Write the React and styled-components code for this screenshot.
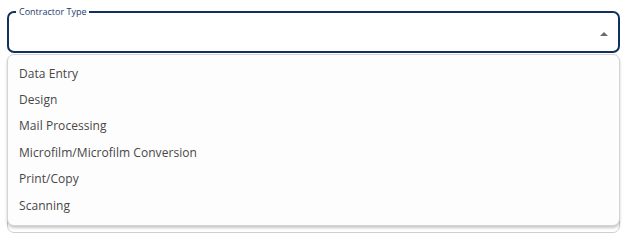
import React from "react";
import styled, { createGlobalStyle } from "styled-components";

const Global = createGlobalStyle`
  html, body { margin: 0; padding: 0; background: #ffffff; }
  body { font-family: "Open Sans", "Liberation Sans", sans-serif; }
`;

const Page = styled.div`
  position: relative;
  box-sizing: border-box;
  height: 233px;
  overflow: hidden;
  padding: 6px 4px 0 7px;
  display: flex;
  flex-direction: column;
  gap: 10px;
`;

const Field = styled.fieldset`
  margin: 0;
  padding: 0 10px 0 7px;
  min-width: 0;
  height: ${(p) => (p.$grow ? "auto" : "47px")};
  flex: ${(p) => (p.$grow ? "1 0 auto" : "0 0 auto")};
  box-sizing: border-box;
  border: ${(p) => (p.$active ? "2px solid #10305f" : "1px solid #cfcfcf")};
  border-radius: 7px;
`;

const Legend = styled.legend`
  font-size: 9px;
  line-height: 12px;
  color: #1d3b6c;
  padding: 0 3px;
`;

const Control = styled.div`
  height: 31px;
  display: flex;
  align-items: center;
  justify-content: flex-end;
`;

const Caret = styled.span`
  width: 0;
  height: 0;
  border-left: 4px solid transparent;
  border-right: 4px solid transparent;
  border-bottom: 4px solid #6a6a6a;
`;

const Menu = styled.ul`
  position: absolute;
  top: 54px;
  left: 7px;
  right: 4px;
  margin: 0;
  padding: 5px 0 7px;
  list-style: none;
  background: #fdfdfd;
  border: 1px solid #d4d4d4;
  border-radius: 7px;
  box-shadow: 0 2px 3px rgba(0, 0, 0, 0.22);
  box-sizing: border-box;
`;

const Item = styled.li`
  height: 26.4px;
  display: flex;
  align-items: center;
  padding-left: 11px;
  font-size: 12px;
  letter-spacing: 0.05px;
  color: #474747;
`;

const items = [
  "Data Entry",
  "Design",
  "Mail Processing",
  "Microfilm/Microfilm Conversion",
  "Print/Copy",
  "Scanning",
];

export default function App() {
  return (
    <>
      <Global />
      <Page>
        <Field $active>
          <Legend>Contractor Type</Legend>
          <Control>
            <Caret />
          </Control>
        </Field>
        <Field $grow />
        <Menu>
          {items.map((t) => (
            <Item key={t}>{t}</Item>
          ))}
        </Menu>
      </Page>
    </>
  );
}
